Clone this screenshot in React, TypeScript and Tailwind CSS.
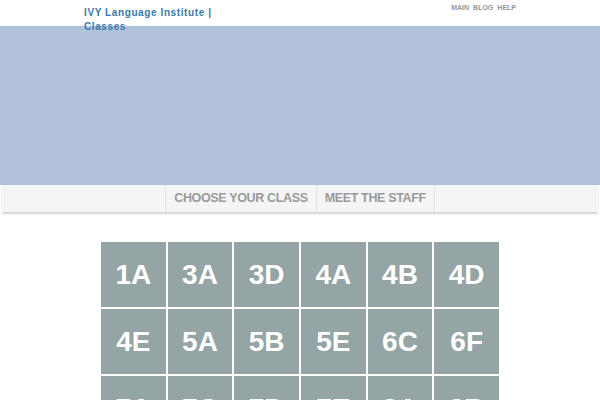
import React from 'react';

const classes = ['1A', '3A', '3D', '4A', '4B', '4D', '4E', '5A', '5B', '5E', '6C', '6F', '7A', '7C', '7D', '7E', '8A', '8B'];

const App: React.FC = () => {
  return (
    <div className="min-h-screen bg-white" style={{ fontFamily: '"Liberation Sans", Arial, sans-serif' }}>
      {/* header */}
      <div className="relative h-[26px] bg-white">
        <div className="mx-auto flex w-[432px] justify-between">
          <h1 className="relative z-10 mt-[6px] w-[140px] text-[10px] font-bold leading-[14px] tracking-[0.6px] text-[#3b79ab]">
            IVY Language Institute | Classes
          </h1>
          <div className="mt-[3px] flex gap-[4px] text-[7px] font-bold text-[#969696]">
            <span>MAIN</span>
            <span>BLOG</span>
            <span>HELP</span>
          </div>
        </div>
      </div>

      {/* banner */}
      <div className="h-[159px] bg-[#b1c1d9]" />

      {/* nav */}
      <div className="mx-[2px] flex h-[27px] justify-center bg-[#f5f5f5] shadow-[0_2px_2px_rgba(0,0,0,0.18)]">
        <div className="flex border-l border-r border-[#e2e2e2]">
          <a className="flex items-center border-r border-[#e2e2e2] px-[8px] text-[12.5px] font-bold tracking-[-0.35px] text-[#9a9a9a]">CHOOSE YOUR CLASS</a>
          <a className="flex items-center px-[8px] text-[12.5px] font-bold tracking-[-0.35px] text-[#9a9a9a]">MEET THE STAFF</a>
        </div>
      </div>

      {/* class grid */}
      <div className="mx-auto mt-[30px] grid w-[398px] grid-cols-6 gap-[2px]">
        {classes.map(c => (
          <div key={c} className="flex h-[65px] items-center justify-center bg-[#95a4a4] text-[28px] font-bold text-white">
            {c}
          </div>
        ))}
      </div>
    </div>
  );
};

export default App;
